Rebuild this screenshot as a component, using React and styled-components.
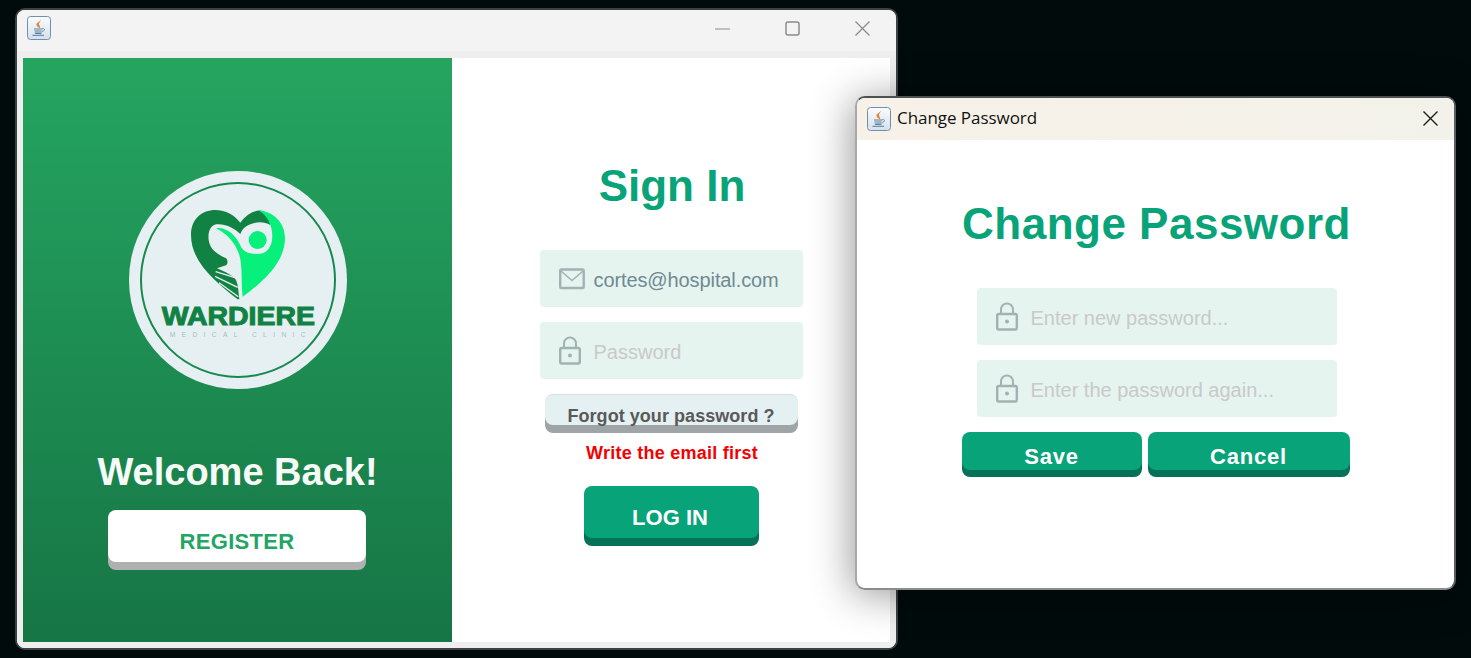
import React from "react";
import styled, { createGlobalStyle } from "styled-components";

//page reset
const GlobalStyle = createGlobalStyle`
  html, body {
    margin: 0;
    padding: 0;
    background: #010b0c;
  }
  * {
    box-sizing: border-box;
  }
`;

//small drawings
const JavaIcon = () => (
  <svg width="24" height="24" viewBox="0 0 24 24">
    <defs>
      <linearGradient id="javaBg" x1="0" y1="0" x2="0" y2="1">
        <stop offset="0" stopColor="#fbfcfe" />
        <stop offset="1" stopColor="#d5e0ec" />
      </linearGradient>
    </defs>
    <rect x="0.5" y="0.5" width="23" height="23" rx="3" fill="url(#javaBg)" stroke="#6f8fae" />
    <path d="M13.500 3.500C14 6 11.500 6.800 12 8.500C12.300 9.500 13.500 10 13 12.300C11 11.500 9 10 9.500 8C10 6.200 13 6 13.500 3.500Z" fill="#e8843a" />
    <path d="M7 13h8M7.500 15h7" stroke="#5f7f9c" strokeWidth="1.200" />
    <path d="M7.500 16.400h7.500c-.4 1-1 1.500-1.800 1.500h-3.900c-.8 0-1.400-.5-1.800-1.500z" fill="#5f7f9c" />
    <path d="M15 12.800c2-.6 3 .4 2.300 1.500-.5.7-1.500 1-2.600 1.100" fill="none" stroke="#6f8fae" />
    <path d="M5.500 19.300h11.500" stroke="#6f8fae" strokeWidth="1.200" />
  </svg>
);

const MailIcon = () => (
  <svg width="26" height="22" viewBox="0 0 26 22" fill="none" stroke="#a1b2b2">
    <rect x="1.200" y="1.500" width="23.500" height="18.500" rx="1" strokeWidth="2.400" />
    <path d="M2 3l11 9.500L24 3" strokeWidth="1.500" />
  </svg>
);

const LockIcon = () => (
  <svg width="22" height="29" viewBox="0 0 22 29" fill="none" stroke="#a1b2b2">
    <path d="M5 12V7.500a6 6 0 0 1 12 0V12" strokeWidth="2" />
    <rect x="1.200" y="12" width="19.600" height="15.500" rx="1.500" strokeWidth="2.400" />
    <circle cx="11" cy="19.500" r="2" fill="#a1b2b2" stroke="none" />
  </svg>
);

//logo is drawn in the coordinates of the 3x crop
const Logo = () => (
  <LogoSvg viewBox="54 33 654 654">
    <circle cx="381" cy="360" r="327" fill="#e6f0f2" />
    <circle cx="381" cy="360" r="291" fill="none" stroke="#17894f" strokeWidth="6" />
    <path
      d="M380 418C320 370 240 310 240 225C240 175 275 150 312 150C345 150 370 165 388 188C405 165 430 150 450 152C465 160 475 175 478 195C460 185 440 185 420 192C405 198 395 205 388 222C365 200 340 190 315 193C298 198 290 215 293 240C297 265 310 278 345 295C352 302 350 312 345 316L318 325C340 335 365 345 375 360C382 375 382 395 385 418Z"
      fill="#118244"
    />
    <path
      d="M314 335L372 353M312 349L380 382M324 368L382 410"
      fill="none"
      stroke="#e6f0f2"
      strokeWidth="4"
    />
    <path
      d="M315 205C345 200 375 225 390 260C400 280 430 285 455 280C480 270 490 240 480 200C475 180 460 160 440 150C490 155 522 190 522 235C522 310 450 370 395 410C390 370 395 320 385 285C372 245 345 220 315 205Z"
      fill="#08f07c"
    />
    <circle cx="440" cy="240" r="27" fill="#08f07c" />
    <LogoName x="152" y="494" textLength="460" lengthAdjust="spacingAndGlyphs">
      WARDIERE
    </LogoName>
    <LogoSub x="176" y="531" textLength="408" lengthAdjust="spacing">
      MEDICAL CLINIC
    </LogoSub>
  </LogoSvg>
);

const Field = ({ icon, value, placeholder }) => (
  <FieldBox>
    <FieldIcon>{icon}</FieldIcon>
    <FieldText $filled={Boolean(value)}>{value || placeholder}</FieldText>
  </FieldBox>
);

const App = () => {
  return (
    <Desktop>
      <GlobalStyle />
      <MainWindow>
        <TitleBar>
          <JavaIcon />
          <WindowControls>
            <svg width="15" height="15" viewBox="0 0 15 15" stroke="#8c8c8c" strokeWidth="1.200">
              <path d="M0 8h15" />
            </svg>
            <svg width="15" height="15" viewBox="0 0 15 15" fill="none" stroke="#8c8c8c" strokeWidth="1.500">
              <rect x="1" y="1" width="13" height="13" rx="2" />
            </svg>
            <svg width="15" height="15" viewBox="0 0 15 15" stroke="#8c8c8c" strokeWidth="1.300">
              <path d="M0.500 0.500l14 14M14.500 0.500l-14 14" />
            </svg>
          </WindowControls>
        </TitleBar>
        <WindowBody>
          <WelcomePanel>
            <Logo />
            <WelcomeText>Welcome Back!</WelcomeText>
            <RegisterButton>REGISTER</RegisterButton>
          </WelcomePanel>
          <SignInPanel>
            <Heading>Sign In</Heading>
            <Fields>
              <Field icon={<MailIcon />} value="cortes@hospital.com" />
              <Field icon={<LockIcon />} placeholder="Password" />
            </Fields>
            <ForgotButton>Forgot your password ?</ForgotButton>
            <ErrorText>Write the email first</ErrorText>
            <LoginButton>LOG IN</LoginButton>
          </SignInPanel>
        </WindowBody>
      </MainWindow>

      <Dialog>
        <DialogTitleBar>
          <JavaIcon />
          <DialogTitle>Change Password</DialogTitle>
          <DialogClose>
            <svg width="15" height="15" viewBox="0 0 15 15" stroke="#1c1c1c" strokeWidth="1.400">
              <path d="M0.500 0.500l14 14M14.500 0.500l-14 14" />
            </svg>
          </DialogClose>
        </DialogTitleBar>
        <DialogBody>
          <DialogHeading>Change Password</DialogHeading>
          <DialogFields>
            <Field icon={<LockIcon />} placeholder="Enter new password..." />
            <Field icon={<LockIcon />} placeholder="Enter the password again..." />
          </DialogFields>
          <DialogButtons>
            <DialogButton $width={180}>Save</DialogButton>
            <DialogButton $width={202}>Cancel</DialogButton>
          </DialogButtons>
        </DialogBody>
      </Dialog>
    </Desktop>
  );
};

export default App;

//component styling
const Desktop = styled.div`
  position: relative;
  width: 1471px;
  height: 658px;
  overflow: hidden;
  background: #010b0c;
  font-family: "Liberation Sans", Arial, sans-serif;
`;

const MainWindow = styled.div`
  position: absolute;
  left: 15px;
  top: 8px;
  width: 883px;
  height: 642px;
  display: flex;
  flex-direction: column;
  border: 2px solid #3c4142;
  border-radius: 10px;
  background: #f3f3f3;
  overflow: hidden;
`;

const TitleBar = styled.div`
  height: 41px;
  flex: none;
  display: flex;
  align-items: center;
  justify-content: space-between;
  padding: 0 26px 5px 10px;
  background: #f3f3f3;
`;

const WindowControls = styled.div`
  display: flex;
  align-items: center;
  gap: 55px;
`;

const WindowBody = styled.div`
  flex: 1;
  display: flex;
  padding: 7px 6px 6px;
  background: #eeeeee;
`;

const WelcomePanel = styled.div`
  width: 429px;
  display: flex;
  flex-direction: column;
  align-items: center;
  padding-top: 113px;
  background: linear-gradient(180deg, #25a560 0%, #167545 100%);
`;

const LogoSvg = styled.svg`
  width: 218px;
  height: 218px;
  flex: none;
`;

const LogoName = styled.text`
  font-family: "Liberation Sans", Arial, sans-serif;
  font-weight: 700;
  font-size: 76px;
  fill: #118244;
  stroke: #118244;
  stroke-width: 3px;
`;

const LogoSub = styled.text`
  font-family: "Liberation Sans", Arial, sans-serif;
  font-size: 20px;
  fill: #9cc3bc;
`;

const WelcomeText = styled.div`
  margin-top: 60px;
  font-size: 38px;
  line-height: 46px;
  font-weight: 700;
  color: #f7fbf8;
`;

const RaisedButton = styled.div`
  display: flex;
  align-items: center;
  justify-content: center;
  flex: none;
  border-radius: 8px;
  font-weight: 700;
`;

const RegisterButton = styled(RaisedButton)`
  width: 258px;
  height: 52px;
  margin: 15px 1px 0 0;
  padding-top: 11px;
  background: #ffffff;
  box-shadow: 0 8px 0 #b0b0b0;
  font-size: 22px;
  letter-spacing: 0.3px;
  color: #22a565;
`;

const SignInPanel = styled.div`
  flex: 1;
  display: flex;
  flex-direction: column;
  align-items: center;
  padding-top: 100px;
  background: #ffffff;
`;

const Heading = styled.h1`
  margin: 0 0 0 2px;
  font-size: 44px;
  line-height: 56px;
  font-weight: 700;
  color: #08a378;
`;

const DialogHeading = styled(Heading)`
  letter-spacing: 0.5px;
`;

const Fields = styled.div`
  display: flex;
  flex-direction: column;
  gap: 15px;
  width: 263px;
  margin-top: 36px;
`;

const DialogFields = styled(Fields)`
  width: 360px;
  margin-left: 2px;
`;

const FieldBox = styled.div`
  height: 57px;
  display: flex;
  align-items: center;
  padding-left: 19px;
  border-radius: 4px;
  background: #e6f4f0;
`;

const FieldIcon = styled.div`
  width: 35px;
  flex: none;
  display: flex;
  align-items: center;
`;

const FieldText = styled.span`
  padding-top: 4px;
  font-size: 20px;
  letter-spacing: ${(props) => (props.$filled ? "-0.1px" : "0")};
  color: ${(props) => (props.$filled ? "#6f8a90" : "#c9c9c9")};
  white-space: nowrap;
`;

const ForgotButton = styled(RaisedButton)`
  width: 253px;
  height: 31px;
  margin-top: 15px;
  padding-top: 13px;
  background: #e5f0f2;
  box-shadow: 0 8px 0 #9fa5a6;
  border-top: 1px solid #d5e0e3;
  font-size: 18px;
  letter-spacing: 0.05px;
  color: #595959;
`;

const ErrorText = styled.div`
  margin: 17px 0 0 2px;
  font-size: 18px;
  line-height: 22px;
  font-weight: 700;
  letter-spacing: 0.25px;
  color: #f40000;
`;

const LoginButton = styled(RaisedButton)`
  width: 175px;
  height: 52px;
  margin-top: 22px;
  padding: 12px 2px 0 0;
  background: #08a378;
  box-shadow: 0 8px 0 #047257;
  font-size: 22px;
  color: #ffffff;
`;

const Dialog = styled.div`
  position: absolute;
  left: 855px;
  top: 96px;
  width: 601px;
  height: 494px;
  display: flex;
  flex-direction: column;
  border: 2px solid;
  border-color: #4c5152 #5a5e5f #8a8d8e #a8a8a8;
  border-radius: 10px;
  background: #ffffff;
  box-shadow: -2px 4px 42px rgba(0, 0, 0, 0.42);
  overflow: hidden;
`;

const DialogTitleBar = styled.div`
  height: 42px;
  flex: none;
  display: flex;
  align-items: center;
  gap: 6px;
  padding: 0 16px 0 10px;
  background: linear-gradient(90deg, #f7f1e8 0%, #f3f2ea 100%);
`;

const DialogTitle = styled.span`
  flex: 1;
  margin-bottom: 4px;
  font-family: "Open Sans", "Noto Sans", sans-serif;
  font-size: 17px;
  letter-spacing: -0.05px;
  color: #111111;
`;

const DialogClose = styled.div`
  display: flex;
  align-items: center;
  margin-bottom: 1px;
`;

const DialogBody = styled.div`
  flex: 1;
  display: flex;
  flex-direction: column;
  align-items: center;
  padding-top: 56px;
`;

const DialogButtons = styled.div`
  display: flex;
  gap: 6px;
  margin-top: 15px;
`;

const DialogButton = styled(RaisedButton)`
  width: ${(props) => props.$width}px;
  height: 38px;
  padding-top: 12px;
  background: #08a378;
  box-shadow: 0 7px 0 #047257;
  font-size: 22px;
  letter-spacing: 0.8px;
  color: #ffffff;
`;
